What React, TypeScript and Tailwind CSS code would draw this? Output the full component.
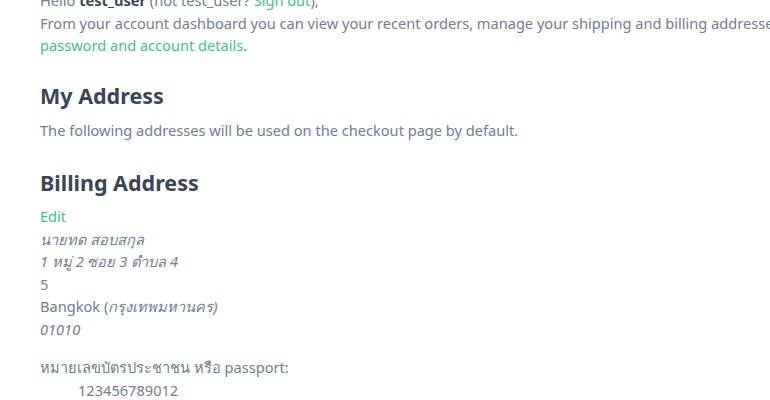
export default function App() {
  return (
    <div
      className="min-h-[400px] bg-white px-10 text-[14.6px] leading-[22.5px] text-[#6f7d95] overflow-hidden"
      style={{ fontFamily: '"Noto Sans", "Open Sans", sans-serif' }}
    >
      <div className="mt-[-11px]">
        <p className="whitespace-nowrap">
          Hello <strong className="font-bold text-[#3a4558]">test_user</strong> (not test_user?{' '}
          <a className="text-[#3bbf8f]">Sign out</a>),
        </p>
        <p className="whitespace-nowrap">
          From your account dashboard you can view your recent orders, manage your shipping and billing addresses, and{' '}
          <a className="text-[#3bbf8f]">edit your</a>
        </p>
        <p>
          <a className="text-[#3bbf8f]">password and account details</a>.
        </p>
      </div>

      <h2 className="mt-[26px] text-[21.5px] leading-[26px] font-bold text-[#3a4558]">My Address</h2>
      <p className="mt-[10px]">The following addresses will be used on the checkout page by default.</p>

      <h3 className="mt-[29px] text-[21.5px] leading-[26px] font-bold text-[#3a4558]">Billing Address</h3>
      <a className="mt-[9px] block text-[#3bbf8f]">Edit</a>
      <address className="not-italic">
        <div className="italic">นายทด สอบสกุล</div>
        <div className="italic">1 หมู่ 2 ซอย 3 ตำบล 4</div>
        <div>5</div>
        <div>
          Bangkok (<span className="italic">กรุงเทพมหานคร)</span>
        </div>
        <div className="italic">01010</div>
      </address>

      <div className="mt-[16px]">
        <div>หมายเลขบัตรประชาชน หรือ passport:</div>
        <div className="pl-[38px]">123456789012</div>
      </div>
    </div>
  );
}
